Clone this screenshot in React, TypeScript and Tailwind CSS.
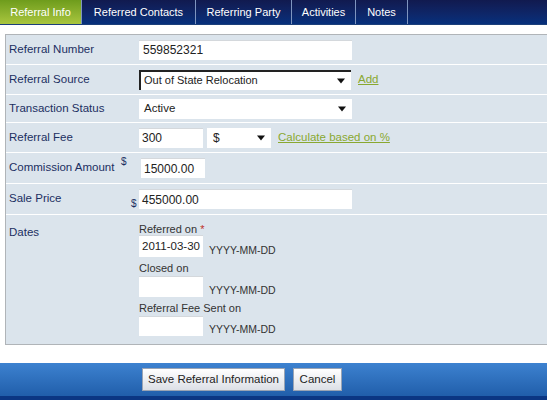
import React from 'react';

const tabs = ['Referral Info', 'Referred Contacts', 'Referring Party', 'Activities', 'Notes'];
const tabWidths = ['w-[82px]', 'w-[114px]', 'w-[96px]', 'w-[64px]', 'w-[52px]'];

function Caret() {
  return <span className="absolute right-[6px] top-1/2 -translate-y-1/2 border-x-[4px] border-t-[5px] border-x-transparent border-t-[#111]" />;
}

function Row({ label, extra, children, h }: { label: string; extra?: React.ReactNode; children: React.ReactNode; h: string }) {
  return (
    <div className={`flex items-center border-b border-white ${h}`}>
      <div className="relative w-[133px] shrink-0 pl-[3px] text-[11.5px] text-[#1b2f62]">
        {label}
        {extra}
      </div>
      <div className="flex items-center">{children}</div>
    </div>
  );
}

export default function App() {
  return (
    <div className="w-[547px] h-[400px] overflow-hidden bg-white text-[12px] font-['Liberation_Sans',Arial,sans-serif] flex flex-col">
      {/* tab strip */}
      <div className="h-[25px] shrink-0 flex bg-gradient-to-b from-[#111a4f] to-[#06307c] border-b border-[#1c3f7a]">
        {tabs.map((t, i) => (
          <div
            key={t}
            className={`${tabWidths[i]} h-full flex items-center justify-center text-[11px] text-white border-r border-[#7f95bf] ${
              i === 0 ? 'bg-gradient-to-b from-[#6e9c1c] to-[#a9c63e] text-[#f0f6d6]' : ''
            }`}
          >
            {t}
          </div>
        ))}
      </div>

      <div className="h-[9px] shrink-0" />

      {/* form panel */}
      <div className="ml-[5px] shrink-0 border-l border-y border-[#b0b4b8] bg-[#dbe4ec]">
        <Row label="Referral Number" h="h-[30px]">
          <div className="w-[213px] h-[20px] bg-white border-t border-[#d4d8dc] pl-[4px] flex items-center text-[#222]">559852321</div>
        </Row>
        <Row label="Referral Source" h="h-[30px]">
          <div className="relative w-[212px] h-[20px] bg-white border-t-2 border-l-2 border-[#222] pl-[3px] flex items-center text-[11px] text-[#222]">
            Out of State Relocation
            <Caret />
          </div>
          <a className="ml-[7px] text-[11.5px] text-[#89a830] underline">Add</a>
        </Row>
        <Row label="Transaction Status" h="h-[28px]">
          <div className="relative w-[213px] h-[20px] bg-white pl-[5px] flex items-center text-[11.5px] text-[#222]">
            Active
            <Caret />
          </div>
        </Row>
        <Row label="Referral Fee" h="h-[30px]">
          <div className="w-[64px] h-[20px] bg-white border-t border-[#d4d8dc] pl-[3px] flex items-center text-[#222]">300</div>
          <div className="relative ml-[4px] w-[64px] h-[20px] bg-white pl-[6px] flex items-center text-[#222]">
            $
            <Caret />
          </div>
          <a className="ml-[7px] text-[11.5px] text-[#89a830] underline">Calculate based on %</a>
        </Row>
        <Row
          label="Commission Amount"
          h="h-[31px]"
          extra={<span className="absolute left-[115px] -top-[5px] text-[10px] text-[#1b2f62]">$</span>}
        >
          <div className="ml-[2px] w-[64px] h-[20px] bg-white border-t border-[#d4d8dc] pl-[3px] flex items-center text-[#222]">15000.00</div>
        </Row>
        <Row
          label="Sale Price"
          h="h-[31px]"
          extra={<span className="absolute left-[125px] top-[6px] text-[10px] text-[#1b2f62]">$</span>}
        >
          <div className="w-[213px] h-[20px] bg-white border-t border-[#d4d8dc] pl-[3px] flex items-center text-[#222]">455000.00</div>
        </Row>
        <div className="flex h-[129px] pt-[7px]">
          <div className="w-[133px] shrink-0 pl-[3px] pt-[2px] text-[11.5px] text-[#1b2f62]">Dates</div>
          <div className="flex flex-col text-[11px] text-[#333]">
            <div className="h-[14px] leading-[14px]">
              Referred on <span className="text-[#c0302a]">*</span>
            </div>
            <div className="flex items-end h-[22px] mt-[-1px]">
              <div className="w-[64px] h-[22px] bg-white border-t border-[#d4d8dc] pl-[3px] flex items-center text-[11.5px] text-[#222]">2011-03-30</div>
              <span className="ml-[6px] text-[10.5px] leading-[14px] text-[#333]">YYYY-MM-DD</span>
            </div>
            <div className="mt-[3px] h-[16px] leading-[16px]">Closed on</div>
            <div className="flex items-end h-[21px]">
              <div className="w-[64px] h-[21px] bg-white border-t border-[#d4d8dc]" />
              <span className="ml-[6px] text-[10.5px] leading-[14px]">YYYY-MM-DD</span>
            </div>
            <div className="mt-[3px] h-[16px] leading-[16px]">Referral Fee Sent on</div>
            <div className="flex items-end h-[20px]">
              <div className="w-[64px] h-[20px] bg-white border-t border-[#d4d8dc]" />
              <span className="ml-[6px] text-[10.5px] leading-[14px]">YYYY-MM-DD</span>
            </div>
          </div>
        </div>
      </div>

      <div className="h-[18px] shrink-0" />

      {/* footer */}
      <div className="flex-1 flex flex-col bg-gradient-to-b from-[#3d82d0] to-[#1d5aa6]">
        <div className="flex-1 flex items-center pl-[142px] gap-[8px]">
          <button className="w-[143px] h-[23px] border border-[#9aa4b4] bg-gradient-to-b from-[#ffffff] to-[#dcdfe6] text-[#222] text-[11.5px]">
            Save Referral Information
          </button>
          <button className="w-[49px] h-[23px] border border-[#9aa4b4] bg-gradient-to-b from-[#ffffff] to-[#dcdfe6] text-[#222] text-[11.5px]">
            Cancel
          </button>
        </div>
        <div className="h-[4px] bg-[#0b3683]" />
      </div>
    </div>
  );
}
